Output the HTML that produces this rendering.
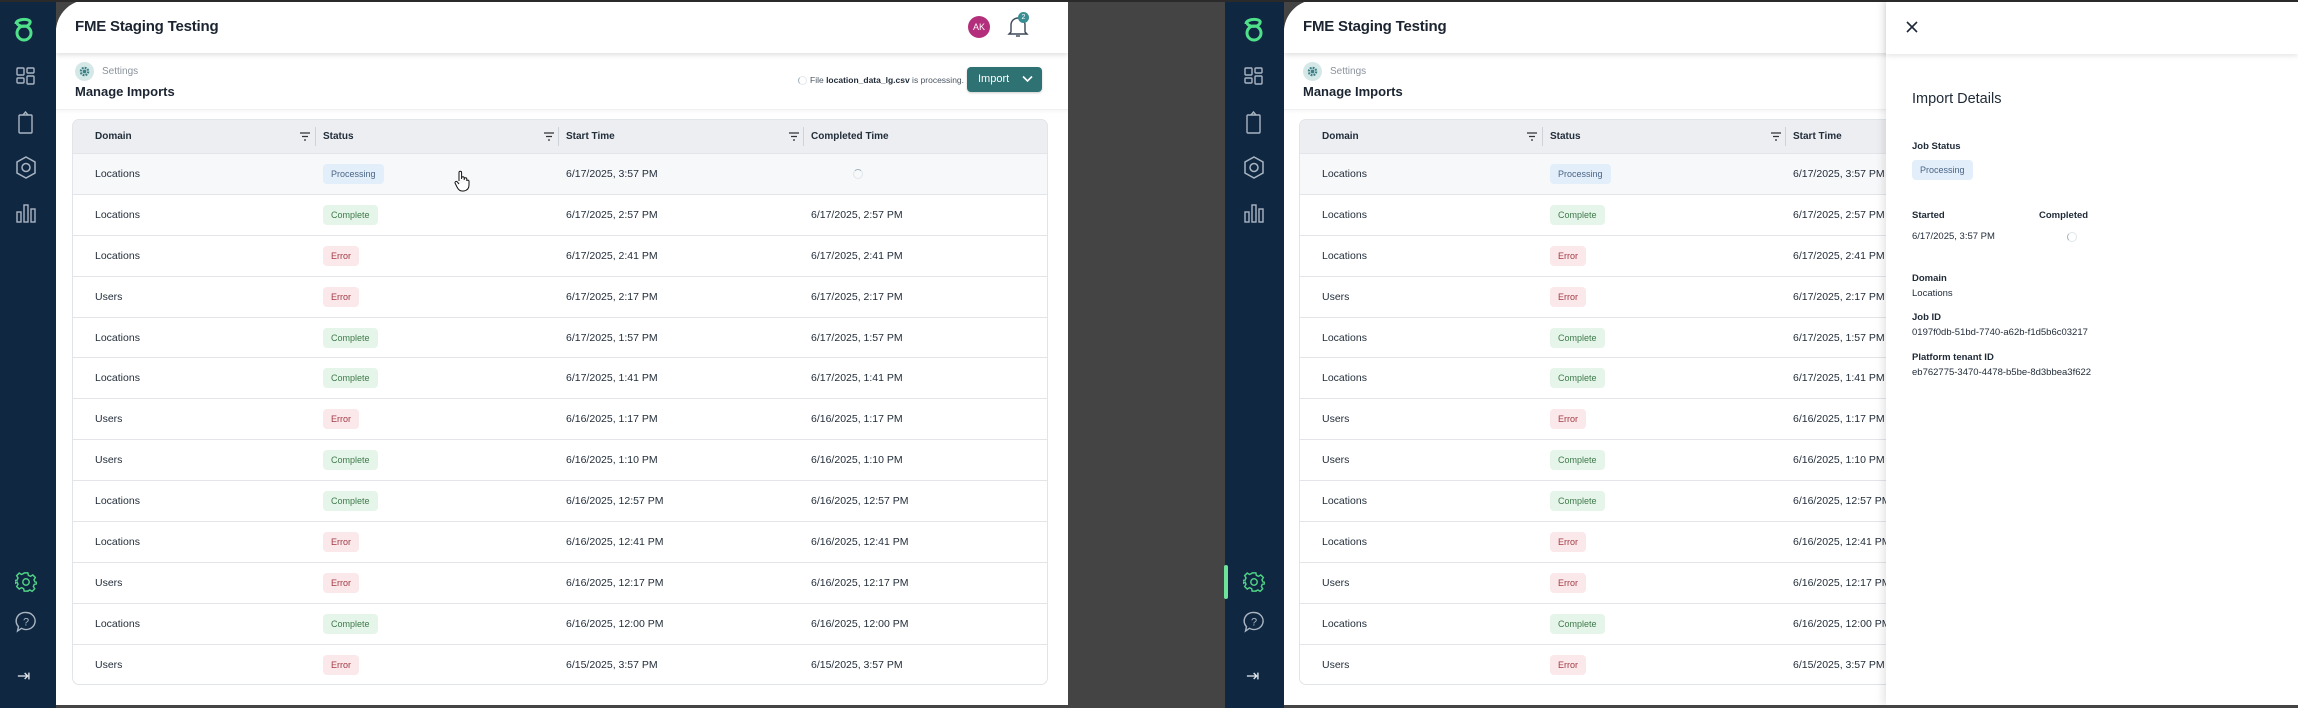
<!DOCTYPE html>
<html><head><meta charset="utf-8"><style>
*{box-sizing:border-box;margin:0;padding:0}
body{width:2298px;height:708px;background:#444;font-family:"Liberation Sans",sans-serif;position:relative;overflow:hidden;color:#1f2a37}
.abs{position:absolute}
.sb{position:absolute;top:0;height:708px;background:#0f2741}
.card{position:absolute;top:0;height:705px;background:#fff;border-top-left-radius:32px;overflow:hidden}
.hdr{position:absolute;left:0;top:0;right:0;height:53px;background:#fff;box-shadow:0 2px 5px rgba(0,0,0,.13);z-index:2}
.title{position:absolute;left:19px;top:18px;font-size:15px;font-weight:bold;color:#1b2430;letter-spacing:-.2px}
.sub{position:absolute;left:0;right:0;top:53px;height:57px;border-bottom:1px solid #eef0f2;box-shadow:0 2px 3px rgba(0,0,0,.04)}
.crumb{position:absolute;left:46px;top:13px;font-size:10px;color:#8a929c}
.gear{position:absolute;left:-27px;top:-4px;width:19px;height:19px;border-radius:50%;background:#d4e8e8}
.mi{position:absolute;left:19px;top:31px;font-size:13px;font-weight:bold;color:#1b2430}
.tbl{position:absolute;top:119px;width:976px;height:566px;border:1px solid #e1e4e8;border-radius:7px;overflow:hidden}
.th{height:33px;background:#eceef2;position:relative;font-size:10px;font-weight:bold;color:#222d3a}
.row{height:40.9px;border-top:1px solid #e3e5e9;position:relative;font-size:10.5px;color:#1f2a37}
.c{position:absolute;top:0;height:100%;display:flex;align-items:center}
.c1{left:22px}.c2{left:250px}.c3{left:493px}.c4{left:738px}
.sep{position:absolute;top:7px;height:19px;width:1px;background:#cfd3d9}
.flt{position:absolute;top:12px;width:10px;height:9px}
.b{display:inline-block;height:20px;line-height:20px;padding:0 8px;border-radius:4px;font-size:9px}
.bp{background:#e3eefb;color:#4b6584}
.bc{background:#e6f5e9;color:#3e7a4b}
.be{background:#fbe8ea;color:#a23a45}
.spin{width:10px;height:10px;border-radius:50%;border:1.5px solid #dfe6ea;border-top-color:#9fb3bd}
.ic{position:absolute}
</style></head><body>
<div class="abs" style="left:0;top:0;width:2298px;height:2px;background:#2a2a2a;z-index:9"></div>

<!-- LEFT PANEL -->
<div class="sb" style="left:0;width:56px"></div>
<svg class="ic" style="left:12px;top:14px" width="24" height="28" viewBox="0 0 24 28"><g fill="none" stroke="#4fe08a" stroke-width="3"><circle cx="12" cy="19" r="7"/><path d="M4 10 C4 4 20 4 18 9 C16 14 6 13 5 9"/></g></svg>
<svg class="ic" style="left:16px;top:67px" width="20" height="20" viewBox="0 0 20 20" fill="none" stroke="#aab5c2" stroke-width="1.4"><rect x="1" y="1" width="7" height="7" rx="1"/><rect x="11" y="1" width="7" height="5" rx="1"/><rect x="1" y="11" width="7" height="5" rx="1"/><rect x="11" y="9" width="7" height="8" rx="1"/></svg>
<svg class="ic" style="left:17px;top:111px" width="18" height="24" viewBox="0 0 18 24" fill="none" stroke="#aab5c2" stroke-width="1.4"><rect x="2" y="4" width="13" height="18" rx="1"/><path d="M6 4 L8.5 1 L11 4"/></svg>
<svg class="ic" style="left:15px;top:156px" width="22" height="24" viewBox="0 0 22 24" fill="none" stroke="#aab5c2" stroke-width="1.5"><path d="M11 1 L20 6 L20 17 L11 22 L2 17 L2 6 Z"/><circle cx="11" cy="11.5" r="4"/></svg>
<svg class="ic" style="left:16px;top:203px" width="20" height="20" viewBox="0 0 20 20" fill="none" stroke="#aab5c2" stroke-width="1.4"><rect x="1" y="9" width="4" height="10"/><rect x="8" y="2" width="4" height="17"/><rect x="15" y="6" width="4" height="13"/></svg>
<svg class="ic" style="left:15px;top:571px" width="22" height="22" viewBox="0 0 24 24" fill="none" stroke="#4fd184" stroke-width="1.6"><circle cx="12" cy="12" r="3.5"/><path d="M10 2h4l.6 2.8 2.3 1 2.5-1.5 2.8 2.8-1.5 2.5 1 2.3L24 12.4v-.8l-.2 2.4-2.8.6-1 2.3 1.5 2.5-2.8 2.8-2.5-1.5-2.3 1L14 22h-4l-.6-2.8-2.3-1-2.5 1.5-2.8-2.8 1.5-2.5-1-2.3L0 13.6v-3.2l2.3-.5 1-2.3L1.8 5.1l2.8-2.8 2.5 1.5 2.3-1z"/></svg>
<svg class="ic" style="left:15px;top:611px" width="22" height="22" viewBox="0 0 22 22" fill="none" stroke="#aab5c2" stroke-width="1.4"><path d="M11 1.5a9 8.5 0 1 1-4.5 15.8L2.5 20l1-4.3A9 8.5 0 0 1 11 1.5z"/><text x="11" y="14.5" font-size="11" fill="#aab5c2" stroke="none" text-anchor="middle" font-family="Liberation Sans">?</text></svg>
<div class="abs" style="left:17px;top:666px;color:#dfe5ec;font-size:16px">⇥</div>

<div class="card" style="left:56px;width:1012px">
 <div class="hdr"><div class="title">FME Staging Testing</div>
  <div class="abs" style="left:912px;top:16px;width:22px;height:22px;border-radius:50%;background:#b32f7c;color:#fff;font-size:9px;line-height:22px;text-align:center">AK</div>
  <svg class="abs" style="left:951px;top:14px" width="22" height="24" viewBox="0 0 22 24" fill="none" stroke="#3b4756" stroke-width="1.4"><path d="M4 18 L4 11 a7 7 0 0 1 14 0 L18 18 L20 20 L2 20 Z"/><path d="M9 22 h4"/></svg>
  <div class="abs" style="left:962px;top:12px;width:11px;height:11px;border-radius:50%;background:#3a8d92;color:#fff;font-size:7px;line-height:11px;text-align:center">2</div>
 </div>
 <div class="sub">
  <div class="crumb"><div class="gear"></div><svg class="abs" style="left:-23px;top:0" width="11" height="11" viewBox="0 0 24 24"><circle cx="12" cy="12" r="8" fill="none" stroke="#3b7f86" stroke-width="5" stroke-dasharray="4 2.3"/><circle cx="12" cy="12" r="4" fill="#3b7f86"/></svg>Settings</div>
  <div class="mi">Manage Imports</div>
  <div class="abs" style="left:742px;top:23px;width:9px;height:9px;border-radius:50%;border:1.3px solid #e3e8ec;border-left-color:#9fb0ba"></div>
  <div class="abs" style="left:754px;top:22px;font-size:8.5px;color:#4a5562">File <b style="color:#1f2a37">location_data_lg.csv</b> is processing.</div>
  <div class="abs" style="left:911px;top:14px;width:75px;height:25px;background:#2f7273;border-radius:4px;color:#fff;font-size:11px;line-height:25px;padding-left:11px;box-shadow:0 1px 2px rgba(0,0,0,.2)">Import<svg class="abs" style="left:55px;top:8px" width="11" height="8" viewBox="0 0 11 8"><path d="M1 1.5 L5.5 6 L10 1.5" fill="none" stroke="#fff" stroke-width="1.6"/></svg></div>
 </div>
 <div class="tbl" style="left:16px">
  <div class="th">
   <div class="c c1">Domain</div><div class="c c2" style="left:250px">Status</div><div class="c c3">Start Time</div><div class="c c4">Completed Time</div>
   <div class="sep" style="left:242px"></div><div class="sep" style="left:485px"></div><div class="sep" style="left:730px"></div>
   <svg class="flt" style="left:227px" viewBox="0 0 10 9"><path d="M0 1h10M2 4.5h6M4 8h2" stroke="#333" stroke-width="1.3"/></svg>
   <svg class="flt" style="left:471px" viewBox="0 0 10 9"><path d="M0 1h10M2 4.5h6M4 8h2" stroke="#333" stroke-width="1.3"/></svg>
   <svg class="flt" style="left:716px" viewBox="0 0 10 9"><path d="M0 1h10M2 4.5h6M4 8h2" stroke="#333" stroke-width="1.3"/></svg>
  </div>
  <div class="row" style="background:#f7f8fa"><div class="c c1">Locations</div><div class="c c2"><span class="b bp">Processing</span></div><div class="c c3">6/17/2025, 3:57 PM</div><div class="c" style="left:780px"><div class="spin"></div></div></div>
  <div class="row"><div class="c c1">Locations</div><div class="c c2"><span class="b bc">Complete</span></div><div class="c c3">6/17/2025, 2:57 PM</div><div class="c c4">6/17/2025, 2:57 PM</div></div>
  <div class="row"><div class="c c1">Locations</div><div class="c c2"><span class="b be">Error</span></div><div class="c c3">6/17/2025, 2:41 PM</div><div class="c c4">6/17/2025, 2:41 PM</div></div>
  <div class="row"><div class="c c1">Users</div><div class="c c2"><span class="b be">Error</span></div><div class="c c3">6/17/2025, 2:17 PM</div><div class="c c4">6/17/2025, 2:17 PM</div></div>
  <div class="row"><div class="c c1">Locations</div><div class="c c2"><span class="b bc">Complete</span></div><div class="c c3">6/17/2025, 1:57 PM</div><div class="c c4">6/17/2025, 1:57 PM</div></div>
  <div class="row"><div class="c c1">Locations</div><div class="c c2"><span class="b bc">Complete</span></div><div class="c c3">6/17/2025, 1:41 PM</div><div class="c c4">6/17/2025, 1:41 PM</div></div>
  <div class="row"><div class="c c1">Users</div><div class="c c2"><span class="b be">Error</span></div><div class="c c3">6/16/2025, 1:17 PM</div><div class="c c4">6/16/2025, 1:17 PM</div></div>
  <div class="row"><div class="c c1">Users</div><div class="c c2"><span class="b bc">Complete</span></div><div class="c c3">6/16/2025, 1:10 PM</div><div class="c c4">6/16/2025, 1:10 PM</div></div>
  <div class="row"><div class="c c1">Locations</div><div class="c c2"><span class="b bc">Complete</span></div><div class="c c3">6/16/2025, 12:57 PM</div><div class="c c4">6/16/2025, 12:57 PM</div></div>
  <div class="row"><div class="c c1">Locations</div><div class="c c2"><span class="b be">Error</span></div><div class="c c3">6/16/2025, 12:41 PM</div><div class="c c4">6/16/2025, 12:41 PM</div></div>
  <div class="row"><div class="c c1">Users</div><div class="c c2"><span class="b be">Error</span></div><div class="c c3">6/16/2025, 12:17 PM</div><div class="c c4">6/16/2025, 12:17 PM</div></div>
  <div class="row"><div class="c c1">Locations</div><div class="c c2"><span class="b bc">Complete</span></div><div class="c c3">6/16/2025, 12:00 PM</div><div class="c c4">6/16/2025, 12:00 PM</div></div>
  <div class="row"><div class="c c1">Users</div><div class="c c2"><span class="b be">Error</span></div><div class="c c3">6/15/2025, 3:57 PM</div><div class="c c4">6/15/2025, 3:57 PM</div></div>
 </div>
 <svg class="abs" style="left:398px;top:170px" width="16" height="22" viewBox="0 0 16 22"><path d="M5 11 V2.5 a1.3 1.3 0 0 1 2.6 0 V9 M7.6 8 a1.3 1.3 0 0 1 2.6 0 V10 M10.2 9 a1.3 1.3 0 0 1 2.6 0 V11 M12.8 10.5 a1.3 1.3 0 0 1 2.2 .5 V15 q0 5 -5 6 H8 q-3 0 -5 -4 L1 13 a1.3 1.3 0 0 1 2.2 -1.2 L5 14" fill="#fff" stroke="#111" stroke-width="1"/></svg>
</div>

<!-- RIGHT PANEL -->
<div class="sb" style="left:1225px;width:59px"></div>
<div class="abs" style="left:1224px;top:565px;width:4px;height:34px;background:#6fe39a;border-radius:2px"></div>
<svg class="ic" style="left:1242px;top:14px" width="24" height="28" viewBox="0 0 24 28"><g fill="none" stroke="#4fe08a" stroke-width="3"><circle cx="12" cy="19" r="7"/><path d="M4 10 C4 4 20 4 18 9 C16 14 6 13 5 9"/></g></svg>
<svg class="ic" style="left:1244px;top:67px" width="20" height="20" viewBox="0 0 20 20" fill="none" stroke="#aab5c2" stroke-width="1.4"><rect x="1" y="1" width="7" height="7" rx="1"/><rect x="11" y="1" width="7" height="5" rx="1"/><rect x="1" y="11" width="7" height="5" rx="1"/><rect x="11" y="9" width="7" height="8" rx="1"/></svg>
<svg class="ic" style="left:1245px;top:111px" width="18" height="24" viewBox="0 0 18 24" fill="none" stroke="#aab5c2" stroke-width="1.4"><rect x="2" y="4" width="13" height="18" rx="1"/><path d="M6 4 L8.5 1 L11 4"/></svg>
<svg class="ic" style="left:1243px;top:156px" width="22" height="24" viewBox="0 0 22 24" fill="none" stroke="#aab5c2" stroke-width="1.5"><path d="M11 1 L20 6 L20 17 L11 22 L2 17 L2 6 Z"/><circle cx="11" cy="11.5" r="4"/></svg>
<svg class="ic" style="left:1244px;top:203px" width="20" height="20" viewBox="0 0 20 20" fill="none" stroke="#aab5c2" stroke-width="1.4"><rect x="1" y="9" width="4" height="10"/><rect x="8" y="2" width="4" height="17"/><rect x="15" y="6" width="4" height="13"/></svg>
<svg class="ic" style="left:1243px;top:571px" width="22" height="22" viewBox="0 0 24 24" fill="none" stroke="#4fd184" stroke-width="1.6"><circle cx="12" cy="12" r="3.5"/><path d="M10 2h4l.6 2.8 2.3 1 2.5-1.5 2.8 2.8-1.5 2.5 1 2.3L24 12.4v-.8l-.2 2.4-2.8.6-1 2.3 1.5 2.5-2.8 2.8-2.5-1.5-2.3 1L14 22h-4l-.6-2.8-2.3-1-2.5 1.5-2.8-2.8 1.5-2.5-1-2.3L0 13.6v-3.2l2.3-.5 1-2.3L1.8 5.1l2.8-2.8 2.5 1.5 2.3-1z"/></svg>
<svg class="ic" style="left:1243px;top:611px" width="22" height="22" viewBox="0 0 22 22" fill="none" stroke="#aab5c2" stroke-width="1.4"><path d="M11 1.5a9 8.5 0 1 1-4.5 15.8L2.5 20l1-4.3A9 8.5 0 0 1 11 1.5z"/><text x="11" y="14.5" font-size="11" fill="#aab5c2" stroke="none" text-anchor="middle" font-family="Liberation Sans">?</text></svg>
<div class="abs" style="left:1246px;top:666px;color:#dfe5ec;font-size:16px">⇥</div>

<div class="card" style="left:1284px;width:1014px">
 <div class="hdr"><div class="title">FME Staging Testing</div></div>
 <div class="sub">
  <div class="crumb"><div class="gear"></div><svg class="abs" style="left:-23px;top:0" width="11" height="11" viewBox="0 0 24 24"><circle cx="12" cy="12" r="8" fill="none" stroke="#3b7f86" stroke-width="5" stroke-dasharray="4 2.3"/><circle cx="12" cy="12" r="4" fill="#3b7f86"/></svg>Settings</div>
  <div class="mi">Manage Imports</div>
 </div>
 <div class="tbl" style="left:15px">
  <div class="th">
   <div class="c c1">Domain</div><div class="c c2">Status</div><div class="c c3">Start Time</div>
   <div class="sep" style="left:242px"></div><div class="sep" style="left:485px"></div>
   <svg class="flt" style="left:227px" viewBox="0 0 10 9"><path d="M0 1h10M2 4.5h6M4 8h2" stroke="#333" stroke-width="1.3"/></svg>
   <svg class="flt" style="left:471px" viewBox="0 0 10 9"><path d="M0 1h10M2 4.5h6M4 8h2" stroke="#333" stroke-width="1.3"/></svg>
  </div>
  <div class="row" style="background:#f7f8fa"><div class="c c1">Locations</div><div class="c c2"><span class="b bp">Processing</span></div><div class="c c3">6/17/2025, 3:57 PM</div></div>
  <div class="row"><div class="c c1">Locations</div><div class="c c2"><span class="b bc">Complete</span></div><div class="c c3">6/17/2025, 2:57 PM</div></div>
  <div class="row"><div class="c c1">Locations</div><div class="c c2"><span class="b be">Error</span></div><div class="c c3">6/17/2025, 2:41 PM</div></div>
  <div class="row"><div class="c c1">Users</div><div class="c c2"><span class="b be">Error</span></div><div class="c c3">6/17/2025, 2:17 PM</div></div>
  <div class="row"><div class="c c1">Locations</div><div class="c c2"><span class="b bc">Complete</span></div><div class="c c3">6/17/2025, 1:57 PM</div></div>
  <div class="row"><div class="c c1">Locations</div><div class="c c2"><span class="b bc">Complete</span></div><div class="c c3">6/17/2025, 1:41 PM</div></div>
  <div class="row"><div class="c c1">Users</div><div class="c c2"><span class="b be">Error</span></div><div class="c c3">6/16/2025, 1:17 PM</div></div>
  <div class="row"><div class="c c1">Users</div><div class="c c2"><span class="b bc">Complete</span></div><div class="c c3">6/16/2025, 1:10 PM</div></div>
  <div class="row"><div class="c c1">Locations</div><div class="c c2"><span class="b bc">Complete</span></div><div class="c c3">6/16/2025, 12:57 PM</div></div>
  <div class="row"><div class="c c1">Locations</div><div class="c c2"><span class="b be">Error</span></div><div class="c c3">6/16/2025, 12:41 PM</div></div>
  <div class="row"><div class="c c1">Users</div><div class="c c2"><span class="b be">Error</span></div><div class="c c3">6/16/2025, 12:17 PM</div></div>
  <div class="row"><div class="c c1">Locations</div><div class="c c2"><span class="b bc">Complete</span></div><div class="c c3">6/16/2025, 12:00 PM</div></div>
  <div class="row"><div class="c c1">Users</div><div class="c c2"><span class="b be">Error</span></div><div class="c c3">6/15/2025, 3:57 PM</div></div>
 </div>
 <!-- drawer -->
 <div class="abs" style="left:602px;top:0;width:412px;height:705px;background:#fff;box-shadow:-3px 0 8px rgba(0,0,0,.1);z-index:3">
  <div class="abs" style="left:0;top:0;width:412px;height:54px;box-shadow:0 2px 5px rgba(0,0,0,.1)"></div>
  <svg class="abs" style="left:20px;top:21px" width="12" height="12" viewBox="0 0 12 12"><path d="M1 1L11 11M11 1L1 11" stroke="#1f2a37" stroke-width="1.6"/></svg>
  <div class="abs" style="left:26px;top:91px;font-size:14.5px;color:#1f2a37">Import Details</div>
  <div class="abs" style="left:26px;top:141px;font-size:9.5px;font-weight:bold">Job Status</div>
  <div class="abs" style="left:26px;top:160px"><span class="b bp">Processing</span></div>
  <div class="abs" style="left:26px;top:210px;font-size:9.5px;font-weight:bold">Started</div>
  <div class="abs" style="left:153px;top:210px;font-size:9.5px;font-weight:bold">Completed</div>
  <div class="abs" style="left:26px;top:231px;font-size:9.5px">6/17/2025, 3:57 PM</div>
  <div class="abs spin" style="left:181px;top:232px;border-top-color:#dfe6ea;border-left-color:#9fb3bd"></div>
  <div class="abs" style="left:26px;top:273px;font-size:9.5px;font-weight:bold">Domain</div>
  <div class="abs" style="left:26px;top:288px;font-size:9.5px">Locations</div>
  <div class="abs" style="left:26px;top:312px;font-size:9.5px;font-weight:bold">Job ID</div>
  <div class="abs" style="left:26px;top:327px;font-size:9.5px">0197f0db-51bd-7740-a62b-f1d5b6c03217</div>
  <div class="abs" style="left:26px;top:352px;font-size:9.5px;font-weight:bold">Platform tenant ID</div>
  <div class="abs" style="left:26px;top:367px;font-size:9.5px">eb762775-3470-4478-b5be-8d3bbea3f622</div>
 </div>
</div>
</body></html>
